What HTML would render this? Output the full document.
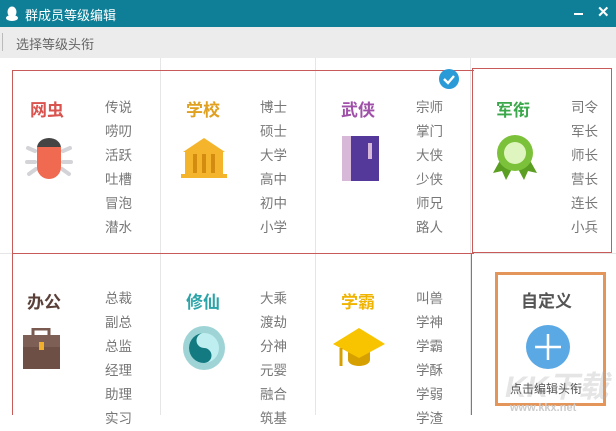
<!DOCTYPE html>
<html><head><meta charset="utf-8"><style>
*{margin:0;padding:0;box-sizing:border-box}
body{width:616px;height:415px;overflow:hidden;background:#fff;font-family:"Liberation Sans","Microsoft YaHei","Noto Sans CJK SC",sans-serif;position:relative}
.a{position:absolute}
.title{left:0;top:0;width:616px;height:27px;background:#0e7f97;color:#fff;font-size:13px}
.tool{left:0;top:27px;width:616px;height:31px;background:#ececec;color:#666;font-size:13px}
.vl{width:1px;background:#e6e6e6;top:58px;height:357px}
.t{font-size:17px;font-weight:bold}
.l{font-size:13.5px;color:#777;line-height:24px}
</style></head><body>
<div class="a title">
<svg class="a" style="left:6px;top:6px" width="12" height="15" viewBox="0 0 12 15"><ellipse cx="6" cy="6" rx="4.5" ry="5.5" fill="#fff"/><ellipse cx="6" cy="12" rx="6" ry="3" fill="#fff"/></svg>
<span class="a" style="left:25px;top:5px">群成员等级编辑</span>
<div class="a" style="left:574px;top:13px;width:9px;height:2px;background:#fff"></div>
<span class="a" style="left:597px;top:3px;font-size:15px;font-weight:bold">✕</span>
</div>
<div class="a tool"><div class="a" style="left:2px;top:6px;width:1px;height:18px;background:#bbb"></div><span class="a" style="left:16px;top:7px">选择等级头衔</span></div>
<div class="a vl" style="left:160px"></div><div class="a vl" style="left:315px"></div><div class="a vl" style="left:470px"></div>
<div class="a" style="left:0;top:253px;width:616px;height:1px;background:#e6e6e6"></div>
<div class="a" style="left:12px;top:70px;width:462px;height:184px;border:1px solid #c85a5a;border-right:none"></div>
<div class="a" style="left:472px;top:68px;width:140px;height:185px;border:1px solid #c85a5a"></div>
<div class="a" style="left:12px;top:253px;width:1px;height:162px;background:#c85a5a"></div>
<div class="a" style="left:471px;top:253px;width:1px;height:162px;background:#c85a5a"></div>
<div class="a" style="left:12px;top:253px;width:460px;height:1px;background:#c85a5a"></div>
<svg class="a" style="left:438px;top:68px" width="22" height="22"><circle cx="11" cy="11" r="10" fill="#2a9bd6"/><path d="M6 11l4 4 6-7" stroke="#fff" stroke-width="2.4" fill="none"/></svg>

<div class="a t" style="left:30px;top:96px;color:#d9534f">网虫</div>
<div class="a l" style="left:105px;top:96px">传说<br>唠叨<br>活跃<br>吐槽<br>冒泡<br>潜水</div>
<svg class="a" style="left:24px;top:133px" width="50" height="50"><g stroke="#d4d4d8" stroke-width="4" stroke-linecap="round"><path d="M4 15l7 3M3 29h8M5 41l7-5M46 15l-7 3M47 29h-8M45 41l-7-5"/></g><path d="M13 15a12 10 0 0 1 24 0z" fill="#444"/><path d="M13 14h24v20a12 12 0 0 1-24 0z" fill="#f06a52"/></svg>

<div class="a t" style="left:186px;top:96px;color:#e0a020">学校</div>
<div class="a l" style="left:260px;top:96px">博士<br>硕士<br>大学<br>高中<br>初中<br>小学</div>
<svg class="a" style="left:181px;top:137px" width="47" height="43"><path d="M23 1L2 15h42z" fill="#f4b52c"/><rect x="4" y="15" width="38" height="23" fill="#f4b52c"/><rect x="12" y="17" width="4" height="19" fill="#d48c10"/><rect x="21" y="17" width="4" height="19" fill="#d48c10"/><rect x="30" y="17" width="4" height="19" fill="#d48c10"/><rect x="0" y="37" width="46" height="4" fill="#f4b52c"/></svg>

<div class="a t" style="left:341px;top:96px;color:#a050a8">武侠</div>
<div class="a l" style="left:416px;top:96px">宗师<br>掌门<br>大侠<br>少侠<br>师兄<br>路人</div>
<div class="a" style="left:342px;top:136px;width:37px;height:45px;background:#55399a"></div>
<div class="a" style="left:342px;top:136px;width:9px;height:45px;background:#d8b8d8"></div>
<div class="a" style="left:368px;top:143px;width:4px;height:16px;background:#d8b8d8"></div>

<div class="a t" style="left:496px;top:96px;color:#3aa84a">军衔</div>
<div class="a l" style="left:571px;top:96px">司令<br>军长<br>师长<br>营长<br>连长<br>小兵</div>
<svg class="a" style="left:491px;top:133px" width="48" height="50"><path d="M12 22L2 40l9-2 4 9 8-15zM36 22l10 18-9-2-4 9-8-15z" fill="#5a9e22"/><circle cx="24" cy="20" r="18" fill="#7cc13a"/><circle cx="24" cy="20" r="11" fill="#dff5c0"/></svg>

<div class="a t" style="left:27px;top:288px;color:#5a4038">办公</div>
<div class="a l" style="left:105px;top:287px">总裁<br>副总<br>总监<br>经理<br>助理<br>实习</div>
<svg class="a" style="left:22px;top:328px" width="40" height="42"><rect x="11" y="1" width="16" height="8" fill="none" stroke="#7a5a50" stroke-width="3"/><rect x="1" y="7" width="37" height="34" fill="#6d4f45"/><rect x="1" y="7" width="37" height="12" fill="#7d5f55"/><rect x="17" y="14" width="5" height="8" fill="#f0b02c"/></svg>

<div class="a t" style="left:186px;top:288px;color:#2aa4a8">修仙</div>
<div class="a l" style="left:260px;top:287px">大乘<br>渡劫<br>分神<br>元婴<br>融合<br>筑基</div>
<svg class="a" style="left:182px;top:325px" width="44" height="46"><ellipse cx="22" cy="23" rx="21" ry="22" fill="#9ed4d6"/><circle cx="22" cy="23" r="15" fill="#bfeef0"/><path d="M22 8a15 15 0 0 0 0 30a7.5 7.5 0 0 0 0-15a7.5 7.5 0 0 1 0-15z" fill="#127a80"/><circle cx="22" cy="15.5" r="2.2" fill="#bfeef0"/><circle cx="22" cy="30.5" r="2.2" fill="#127a80"/></svg>

<div class="a t" style="left:341px;top:288px;color:#f0b400">学霸</div>
<div class="a l" style="left:416px;top:287px">叫兽<br>学神<br>学霸<br>学酥<br>学弱<br>学渣</div>
<svg class="a" style="left:331px;top:326px" width="56" height="44"><path d="M17 20v14a11 6 0 0 0 22 0V20z" fill="#d6a000"/><path d="M28 2L2 18l26 14 26-14z" fill="#f8c400"/><path d="M10 22v18" stroke="#d6a000" stroke-width="3"/></svg>

<div class="a" style="left:495px;top:272px;width:111px;height:134px;border:3px solid #e4955a"></div>
<div class="a" style="left:521px;top:287px;font-size:17px;font-weight:bold;color:#555">自定义</div>
<svg class="a" style="left:526px;top:325px" width="44" height="44"><circle cx="22" cy="22" r="22" fill="#5aa8e4"/><path d="M22 9v26M9 22h26" stroke="#fff" stroke-width="2.5"/></svg>
<div class="a" style="left:505px;top:362px;font-size:30px;font-weight:bold;color:rgba(170,170,170,.3);font-style:italic">KK下载</div>
<div class="a" style="left:510px;top:380px;font-size:12px;color:#555">点击编辑头衔</div>
<div class="a" style="left:510px;top:402px;font-size:11px;font-weight:bold;color:#ccc">www.kkx.net</div>
</body></html>
